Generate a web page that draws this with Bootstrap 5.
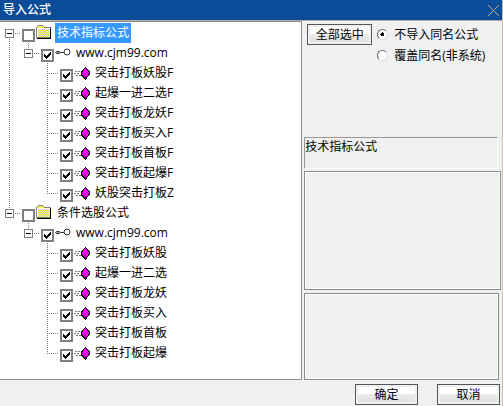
<!DOCTYPE html>
<html lang="zh-CN">
<head>
<meta charset="utf-8">
<meta name="viewport" content="width=device-width, initial-scale=1">
<title>导入公式</title>
<link rel="stylesheet" href="https://cdn.jsdelivr.net/npm/bootstrap@5.3.0/dist/css/bootstrap.min.css">
<style>
  body { font: 12px/20px "Open Sans", "Noto Sans CJK SC", sans-serif; color: #000; background: #f0f0f0; }
  .dialog { border-right: 1px solid #c9c1b0; }
  .titlebar { height: 21px; background: #0b4c99; border-bottom: 1px solid #b5ada0; color: #fff; padding: 0 2px 0 3px; }
  .titlebar h1 { font-size: 12px; line-height: 20px; font-weight: 500; }
  .close-x { border: 0; background: none; padding: 0; line-height: 0; color: #b5a890; }
  .work { display: grid; grid-template-columns: 3fr 2fr; }
  .tree-pane { background: #fff; border: solid #8c8c8c; border-width: 1px 1px 1px 0; padding-top: 1px; margin-right: -1px; }
  .side-pane { padding: 0 1px 0 3px; }
  .tree ul { padding-left: 19px; }
  .tree li { background: repeating-linear-gradient(#808080 0 1px, #fff 1px 2px) 9px 0 / 1px 100% no-repeat; }
  .tree li:last-child { background-size: 1px 10px; }
  .tree > li:first-child { background-position: 9px 10px; }
  .node { height: 20px; padding-left: 9px; }
  .node::before { content: ""; width: 11px; height: 1px; margin-right: 2px; background: repeating-linear-gradient(90deg, #808080 0 1px, #fff 1px 2px); }
  .node.parent { padding-left: 5px; }
  .node.parent::before { order: 1; width: 5px; }
  .node.parent > * { order: 2; }
  .node.parent > .toggle { order: 0; }
  .toggle { width: 9px; height: 9px; margin-right: 1px; padding: 0; border: 1px solid #808080; background: linear-gradient(#000, #000) center / 5px 1px no-repeat #fff; }
  .tick { appearance: none; flex: none; width: 13px; height: 13px; margin: 5px 1px 0 0; border: 2px solid #808080; background: #fff center / 9px 9px no-repeat; }
  .tick:checked { background-image: url("data:image/svg+xml,%3Csvg xmlns='http://www.w3.org/2000/svg' viewBox='0 0 9 9' shape-rendering='crispEdges'%3E%3Cpath d='M1 3h1v1h1v1h1v-1h1v-1h1v-1h1v-1h1v3h-1v1h-1v1h-1v1h-1v1h-1v-1h-1v-1h-1z'/%3E%3C/svg%3E"); }
  .node svg { flex: none; width: 16px; height: 16px; margin-right: 3px; }
  .node label { padding: 0 2px; }
  .picked { background: #3399ff; color: #fff; }
  .btn-classic { --bs-btn-font-size: 12px; --bs-btn-border-radius: 0; --bs-btn-padding-y: 1px; --bs-btn-padding-x: 0; height: 21px; line-height: 17px; width: 65px; border: 1px solid #555; box-shadow: inset 0 0 0 2px #f0f0f0; background: linear-gradient(#fff 0 45%, #ececec 45%, #dcdcdc); color: #000; }
  .actions .btn-classic { width: 63px; }
  .options { padding: 3px 0 0 3px; gap: 5px; }
  .opt { height: 21px; gap: 6px; }
  .opt input { appearance: none; width: 11px; height: 11px; margin: 0; border: 1px solid; border-color: #696969 #ddd #ddd #696969; border-radius: 50%; background: #fff; }
  .opt input:checked { background: radial-gradient(circle, #000 0 2px, #fff 2px); }
  .caption-box { height: 32px; margin: 71px 3px 2px 0; line-height: 18px; border: 1px solid; border-color: #999 #fff #fff #999; }
  .etched { border: 1px solid #8c8c8c; box-shadow: inset 0 0 0 1px #fff; height: 119px; }
  .etched.lower { height: auto; min-height: 86px; margin: 3px 2px 0 0; }
  .actions { padding: 4px 2px 1px; gap: 19px; }
</style>
</head>
<body>
<svg class="visually-hidden" aria-hidden="true">
  <symbol id="folder" viewBox="0 0 16 16" shape-rendering="crispEdges">
    <path d="M1 12V3l1-2h5l1 2h6v9z" fill="#ffff40"/>
    <path d="M2 4.500h11M3 5.500h10M2 6.500h11M3 7.500h10M2 8.500h11M3 9.500h10M2 10.500h11M3 11.500h10M3 2.500h4" fill="none" stroke="#c8c8c8" stroke-dasharray="1 1"/>
    <path d="M.5 12.500V2.500l2-2h4l2 2h5.500v10z" fill="none" stroke="#808080"/>
    <path d="M1.500 12V3.500h12" fill="none" stroke="#fff"/>
    <path d="M1 13.500h13.500V3" fill="none" stroke="#000"/>
  </symbol>
  <symbol id="link" viewBox="0 0 16 16">
    <path d="M1.500 6.500h3l1 1-1 1h-3l-1-1zM6 7.500h3" fill="#999" stroke="#333"/>
    <circle cx="12" cy="7" r="3" fill="#fff" stroke="#333"/>
  </symbol>
  <symbol id="gem" viewBox="0 0 16 16" shape-rendering="crispEdges">
    <path d="M1 6.500h5M0 8.500h6M2 10.500h5" stroke="#808080" stroke-dasharray="2 1"/>
    <path d="M11.500 2.500l-4 4.500v3l4 4 3.500-4.500V6.500z" fill="#f0f" stroke="#000"/>
    <path d="M8 8l3 2.500L14 7M11 11v2" fill="none" stroke="#c000c0"/>
  </symbol>
</svg>
<div class="dialog min-vh-100 d-flex flex-column">
  <header class="titlebar d-flex align-items-center justify-content-between">
    <h1 class="m-0">导入公式</h1>
    <button class="close-x" type="button" aria-label="关闭"><svg width="13" height="13" viewBox="0 0 13 13"><path d="M1 1l11 11M12 1L1 12" stroke="currentColor"/></svg></button>
  </header>
  <main class="work flex-grow-1">
    <section class="tree-pane">
      <ul class="tree list-unstyled m-0" id="tree"></ul>
    </section>
    <section class="side-pane d-flex flex-column">
      <div class="options d-flex align-items-start">
        <button class="btn btn-classic" type="button">全部选中</button>
        <div>
          <div class="opt d-flex align-items-center"><input type="radio" name="dup" id="skip" checked><label for="skip">不导入同名公式</label></div>
          <div class="opt d-flex align-items-center"><input type="radio" name="dup" id="over"><label for="over">覆盖同名(非系统)</label></div>
        </div>
      </div>
      <div class="caption-box">技术指标公式</div>
      <div class="etched"></div>
      <div class="etched lower flex-grow-1"></div>
    </section>
  </main>
  <footer class="actions d-flex justify-content-end">
    <button class="btn btn-classic" type="button">确定</button>
    <button class="btn btn-classic" type="button">取消</button>
  </footer>
</div>
<script src="https://cdn.jsdelivr.net/npm/bootstrap@5.3.0/dist/js/bootstrap.bundle.min.js"></script>
<script>
  const groups = [
    ["技术指标公式", ["突击打板妖股F", "起爆一进二选F", "突击打板龙妖F", "突击打板买入F", "突击打板首板F", "突击打板起爆F", "妖股突击打板Z"]],
    ["条件选股公式", ["突击打板妖股", "起爆一进二选", "突击打板龙妖", "突击打板买入", "突击打板首板", "突击打板起爆"]]
  ];
  let n = 0;
  const row = (text, icon, checked, parent, picked) => {
    const id = "n" + n++;
    return `<div class="node d-flex align-items-center ${parent ? "parent" : ""}">` +
      (parent ? '<button class="toggle" type="button" aria-label="折叠"></button>' : "") +
      `<input class="tick" type="checkbox" id="${id}" ${checked ? "checked" : ""}>` +
      `<svg aria-hidden="true"><use href="#${icon}"/></svg>` +
      `<label for="${id}" class="${picked ? "picked" : ""}">${text}</label></div>`;
  };
  document.getElementById("tree").innerHTML = groups.map(([name, items], i) =>
    `<li>${row(name, "folder", false, true, i === 0)}<ul class="list-unstyled"><li>` +
    row("www.cjm99.com", "link", true, true) + '<ul class="list-unstyled">' +
    items.map(t => `<li>${row(t, "gem", true)}</li>`).join("") + "</ul></li></ul></li>").join("");
</script>
</body>
</html>
